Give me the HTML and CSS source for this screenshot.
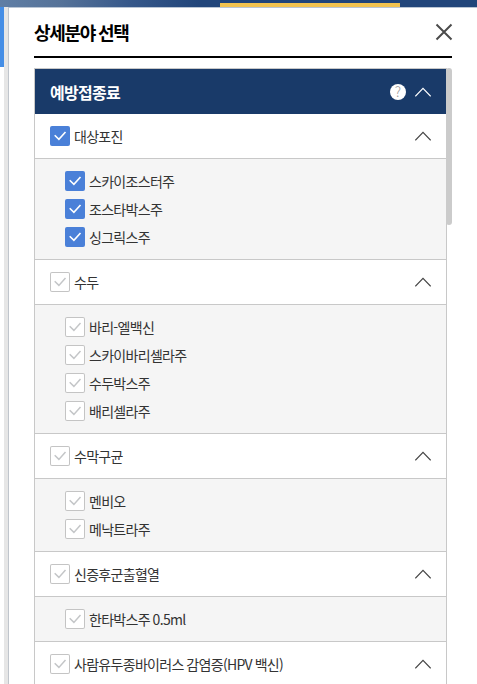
FILE: index.html
```html
<!DOCTYPE html>
<html lang="ko">
<head>
<meta charset="utf-8">
<title>상세분야 선택</title>
<link rel="stylesheet" href="styles.css">
</head>
<body>
<svg class="defs" width="0" height="0">
  <symbol id="check" viewBox="0 0 20 20"><path d="M4.7 9.2 8.9 13.4 15.5 6"/></symbol>
  <symbol id="up" viewBox="0 0 16 10"><path d="M.3 9.4 8 1.4 15.7 9.4"/></symbol>
</svg>
<div class="banner"><span class="banner-tab"></span></div>
<div class="page">
  <div class="side"><div class="side-blue"></div></div>
  <div class="gutter"></div>
  <main class="modal">
    <header class="modal-head">
      <h1>상세분야 선택</h1>
      <svg class="close" viewBox="0 0 16 16"><path d="M.5 .5 15.5 15.5M15.5 .5.5 15.5"/></svg>
    </header>
    <div class="scroll">
      <section class="list">
        <div class="list-head">
          <h2>예방접종료</h2>
          <span class="help">?</span>
          <svg class="arrow"><use href="#up"/></svg>
        </div>
        <div class="row"><svg class="box on"><use href="#check"/></svg><span class="label">대상포진</span><svg class="arrow"><use href="#up"/></svg></div>
        <ul class="sub">
          <li><svg class="box on"><use href="#check"/></svg><span class="label">스카이조스터주</span></li>
          <li><svg class="box on"><use href="#check"/></svg><span class="label">조스타박스주</span></li>
          <li><svg class="box on"><use href="#check"/></svg><span class="label">싱그릭스주</span></li>
        </ul>
        <div class="row"><svg class="box"><use href="#check"/></svg><span class="label">수두</span><svg class="arrow"><use href="#up"/></svg></div>
        <ul class="sub">
          <li><svg class="box"><use href="#check"/></svg><span class="label">바리-엘백신</span></li>
          <li><svg class="box"><use href="#check"/></svg><span class="label">스카이바리셀라주</span></li>
          <li><svg class="box"><use href="#check"/></svg><span class="label">수두박스주</span></li>
          <li><svg class="box"><use href="#check"/></svg><span class="label">배리셀라주</span></li>
        </ul>
        <div class="row"><svg class="box"><use href="#check"/></svg><span class="label">수막구균</span><svg class="arrow"><use href="#up"/></svg></div>
        <ul class="sub">
          <li><svg class="box"><use href="#check"/></svg><span class="label">멘비오</span></li>
          <li><svg class="box"><use href="#check"/></svg><span class="label">메낙트라주</span></li>
        </ul>
        <div class="row"><svg class="box"><use href="#check"/></svg><span class="label">신증후군출혈열</span><svg class="arrow"><use href="#up"/></svg></div>
        <ul class="sub">
          <li><svg class="box"><use href="#check"/></svg><span class="label">한타박스주 0.5ml</span></li>
        </ul>
        <div class="row"><svg class="box"><use href="#check"/></svg><span class="label">사람유두종바이러스 감염증(HPV 백신)</span><svg class="arrow"><use href="#up"/></svg></div>
      </section>
      <div class="thumb"></div>
    </div>
  </main>
</div>
</body>
</html>
```
FILE: styles.css
```css
* { box-sizing: border-box; }
body {
  margin: 0;
  height: 684px;
  overflow: hidden;
  display: flex;
  flex-direction: column;
  background: #fff;
  color: #333;
  font: 14px/20px "Noto Sans CJK KR", sans-serif;
  letter-spacing: -0.05em;
  word-spacing: -0.5px;
}
svg { display: block; flex: none; fill: none; }
.defs { position: absolute; }
.banner {
  flex: none;
  height: 7px;
  padding: 3px 0 0 220px;
  background: linear-gradient(90deg, #5f7ea5 0, #567399 60px, #36588a 130px, #21457a 200px, #21457a 100%);
}
.banner-tab { display: block; width: 180px; height: 4px; background: #f3c34f; }
.page { flex: 1; min-height: 0; display: flex; }
.side { width: 4px; }
.side-blue { height: 60px; background: #458ee6; }
.gutter { width: 4px; background: #e6e6e6; }
.modal {
  flex: 1;
  min-width: 0;
  padding: 0 25px;
  border-top: 1px solid #b9c5d4;
  border-left: 1px solid #c0c5cc;
}
.modal-head {
  display: flex;
  align-items: center;
  justify-content: space-between;
  height: 50px;
  border-bottom: 2px solid #000;
}
h1, h2 { margin: 0; font-weight: 700; }
h1 { font-size: 18px; line-height: 26px; letter-spacing: -1.35px; color: #000; }
.close { width: 16px; height: 16px; stroke: #4b4b4b; stroke-width: 2; overflow: visible; }
.scroll { display: flex; margin-top: 10px; }
.list { width: 413px; border: 1px solid #c8c8c8; }
.list-head { display: flex; align-items: center; height: 45px; padding: 0 15px; background: #193a69; color: #fff; }
h2 { flex: 1; font-size: 16px; line-height: 24px; }
.help {
  width: 16px;
  height: 16px;
  margin-right: 9px;
  border-radius: 50%;
  background: #fff;
  color: #999;
  font-size: 14px;
  font-weight: 300;
  line-height: 15px;
  letter-spacing: 0;
  text-align: center;
}
.arrow { width: 16px; height: 10px; stroke: #444; stroke-width: 1.2; }
.list-head .arrow { stroke: #fff; }
.row { display: flex; align-items: center; height: 45px; padding: 0 15px; border-bottom: 1px solid #c8c8c8; }
.row .label { flex: 1; }
.box { width: 20px; height: 20px; margin-right: 4px; border-radius: 2px; background: #fff; box-shadow: inset 0 0 0 1px #c4c4c4; stroke: #c4c6c8; stroke-width: 1.5; }
.box.on { background: #4a80d8; box-shadow: none; stroke: #fff; stroke-width: 1.6; }
.sub { margin: 0; padding: 8px 30px; list-style: none; background: #f5f5f5; border-bottom: 1px solid #c8c8c8; }
.sub li { display: flex; align-items: center; height: 28px; }
.label { white-space: nowrap; padding-bottom: 1px; }
.thumb { width: 6px; height: 157px; margin-left: -1px; border-radius: 3px; background: #cbcbcb; position: relative; }
```
